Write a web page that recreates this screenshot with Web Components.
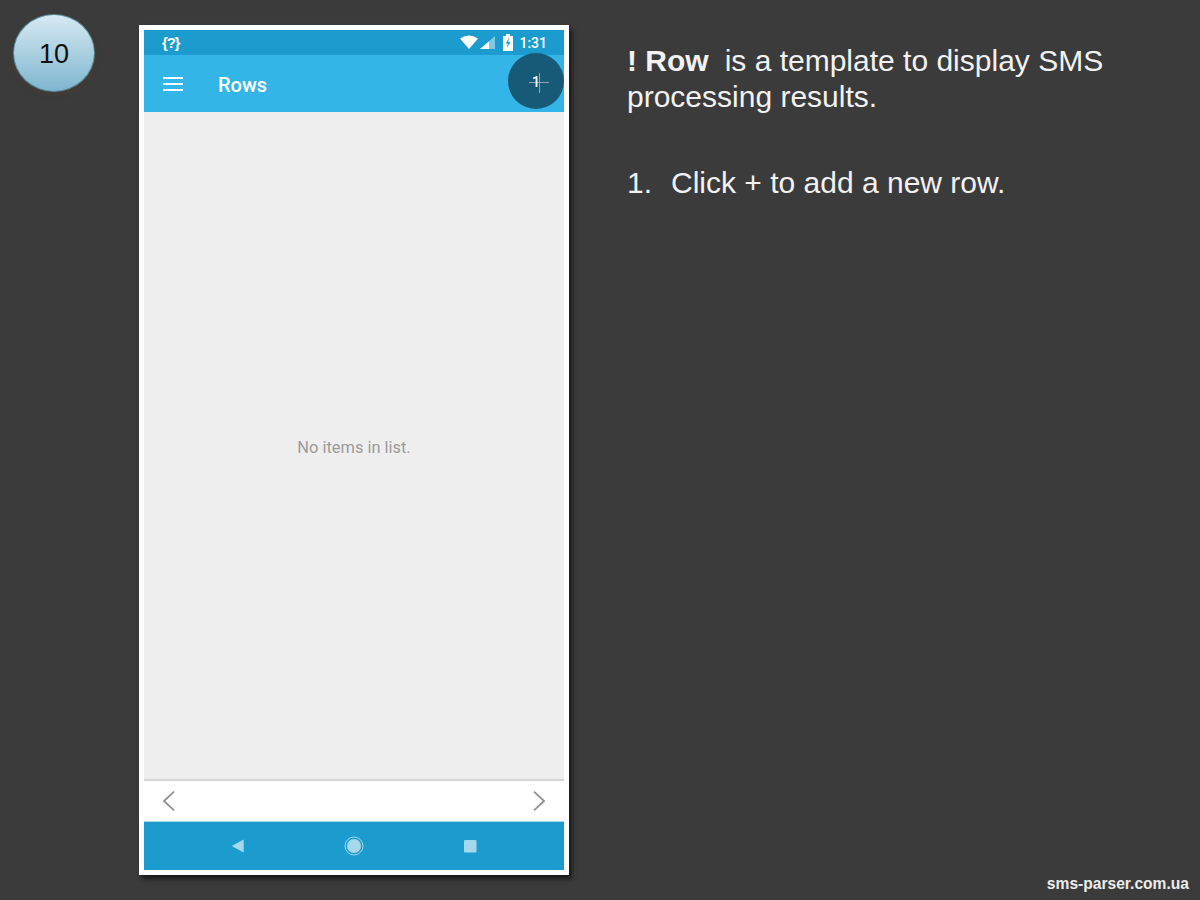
<!DOCTYPE html>
<html>
<head>
<meta charset="utf-8">
<title>Rows</title>
<style>
    html, body{ margin: 0; height: 100%; background: #3b3b3b; }
</style>
</head>
<body>
<help-slide>
    <step-badge slot="badge">10</step-badge>
    <phone-frame slot="phone">
        <status-bar slot="status"></status-bar>
        <app-bar slot="appbar" title="Rows"></app-bar>
        <span slot="empty">No items in list.</span>
        <pager-bar slot="pager"></pager-bar>
        <nav-bar slot="nav"></nav-bar>
    </phone-frame>
    <slide-notes slot="notes"></slide-notes>
    <span slot="footer">sms-parser.com.ua</span>
</help-slide>

<script>
class HelpSlide extends HTMLElement {
    connectedCallback(){
        const shadow = this.attachShadow({ mode: 'open' });
        shadow.innerHTML = `
<style>
    :host{
        display: flex;
        flex-direction: column;
        width: 1200px;
        height: 900px;
        overflow: hidden;
        background: #3b3b3b;
    }
    .main{
        display: flex;
        flex-direction: row;
        align-items: flex-start;
        height: 874px;
    }
    .badge{ padding: 14px 0 0 13px; }
    .phone{ padding: 25px 0 0 44px; }
    .notes{ padding: 43px 0 0 58px; }
    .footer{
        height: 26px;
        text-align: right;
        padding-right: 11px;
        font: bold 15.6px/19px "Liberation Sans", Arial, sans-serif;
        color: #ececec;
    }
</style>
<div class="main">
    <div class="badge"><slot name="badge"></slot></div>
    <div class="phone"><slot name="phone"></slot></div>
    <div class="notes"><slot name="notes"></slot></div>
</div>
<div class="footer"><slot name="footer"></slot></div>`;
    }
}

class StepBadge extends HTMLElement {
    connectedCallback(){
        const shadow = this.attachShadow({ mode: 'open' });
        shadow.innerHTML = `
<style>
    :host{
        display: flex;
        align-items: center;
        justify-content: center;
        box-sizing: border-box;
        width: 82px;
        height: 78px;
        border-radius: 50%;
        border: 1px solid #5a8c9e;
        background: linear-gradient(#d6e9f2, #7fb6cf);
        box-shadow: 0 3px 5px rgba(90, 60, 40, .35);
        font: 27px "Liberation Sans", Arial, sans-serif;
        color: #111;
        padding-top: 2px;
    }
</style>
<slot></slot>`;
    }
}

class PhoneFrame extends HTMLElement {
    connectedCallback(){
        const shadow = this.attachShadow({ mode: 'open' });
        shadow.innerHTML = `
<style>
    :host{
        display: flex;
        flex-direction: column;
        position: relative;
        box-sizing: border-box;
        width: 430px;
        height: 850px;
        border: 5px solid #fff;
        background: #fff;
        box-shadow: 3px 4px 5px rgba(0, 0, 0, .6);
    }
    .list{
        flex: 1;
        display: flex;
        align-items: center;
        justify-content: center;
        padding-top: 4px;
        background: #eeeeee;
        border-bottom: 2px solid #d6d6d6;
        font: 16.4px Roboto, sans-serif;
        color: #9a9a9a;
    }
</style>
<slot name="status"></slot>
<slot name="appbar"></slot>
<div class="list"><slot name="empty"></slot></div>
<slot name="pager"></slot>
<slot name="nav"></slot>`;
    }
}

class StatusBar extends HTMLElement {
    connectedCallback(){
        const shadow = this.attachShadow({ mode: 'open' });
        shadow.innerHTML = `
<style>
    :host{
        display: flex;
        align-items: center;
        height: 25px;
        padding: 0 17px 0 18px;
        background: #1b9bce;
        color: #fff;
        font: 500 14px Roboto, sans-serif;
    }
    .dbg{
        font: bold 15px "Liberation Sans", Arial, sans-serif;
        letter-spacing: -1.2px;
    }
    .gap{ flex: 1; }
    svg{ display: block; }
    .time{ margin-left: 6px; }
</style>
<span class="dbg">{?}</span>
<span class="gap"></span>
<svg width="37" height="16" viewBox="0 0 37 16">
    <path d="M0 3.5 Q9 -2.5 18 3.5 L9 14 Z" fill="#fff"/>
    <path d="M20 14 L35 1 V14 Z" fill="#fff" opacity=".45"/>
    <path d="M20 14 L29 6.5 V14 Z" fill="#fff"/>
</svg>
<svg style="margin-left:6px" width="10" height="17" viewBox="0 0 10 17">
    <path d="M3 0 H7 V2 H10 V17 H0 V2 H3 Z" fill="#fff"/>
    <path d="M6 4 L2.8 9.5 H4.8 L4 14 L7.3 8 H5.3 Z" fill="#1b9bce"/>
</svg>
<span class="time">1:31</span>`;
    }
}

class AppBar extends HTMLElement {
    connectedCallback(){
        const title = this.getAttribute('title');
        const shadow = this.attachShadow({ mode: 'open' });
        shadow.innerHTML = `
<style>
    :host{
        display: flex;
        align-items: center;
        height: 57px;
        padding-left: 19px;
        background: #33b5e8;
        color: #fff;
    }
    svg{ display: block; }
    .title{
        margin-left: 35px;
        padding-top: 2px;
        font: 500 20px Roboto, sans-serif;
    }
    .fab{
        position: absolute;
        right: 0;
        top: 23px;
        width: 56px;
        height: 56px;
        border-radius: 50%;
        background: #175a78;
    }
    .fab svg{ position: absolute; left: 21px; top: 20px; }
    .fab span{
        position: absolute;
        left: 24px;
        top: 21px;
        font: 500 14px/16px Roboto, sans-serif;
        color: #fff;
    }
</style>
<svg width="20" height="14" viewBox="0 0 20 14" fill="#fff">
    <rect y="0" width="20" height="2"/>
    <rect y="6" width="20" height="2"/>
    <rect y="12" width="20" height="2"/>
</svg>
<span class="title">${title}</span>
<div class="fab">
    <svg width="20" height="20" viewBox="0 0 20 20" stroke="#8fa5b0" stroke-width="1">
        <path d="M0 9.5 H20 M10.5 0 V20"/>
    </svg>
    <span>1</span>
</div>`;
    }
}

class PagerBar extends HTMLElement {
    connectedCallback(){
        const shadow = this.attachShadow({ mode: 'open' });
        shadow.innerHTML = `
<style>
    :host{
        display: flex;
        align-items: center;
        justify-content: space-between;
        height: 40px;
        padding: 0 18px;
        background: #fff;
    }
    svg{ display: block; }
</style>
<svg width="13" height="20" viewBox="0 0 13 20" fill="none" stroke="#8f8f8f" stroke-width="1.8">
    <path d="M12 .7 L2 10 L12 19.3"/>
</svg>
<svg width="13" height="20" viewBox="0 0 13 20" fill="none" stroke="#8f8f8f" stroke-width="1.8">
    <path d="M1 .7 L11 10 L1 19.3"/>
</svg>`;
    }
}

class NavBar extends HTMLElement {
    connectedCallback(){
        const shadow = this.attachShadow({ mode: 'open' });
        shadow.innerHTML = `
<style>
    :host{
        display: flex;
        align-items: center;
        justify-content: center;
        gap: 96px;
        box-sizing: border-box;
        height: 49px;
        border-top: 1px solid #a8d8ec;
        background: #1b9bce;
    }
    svg{ display: block; }
</style>
<svg width="20" height="20" viewBox="0 0 20 20" fill="#a6d8ec"><path d="M3.7 10 L15.7 3.5 V16.5 Z"/></svg>
<svg width="20" height="20" viewBox="0 0 20 20">
    <circle cx="10" cy="10" r="9" fill="none" stroke="#a6d8ec" stroke-width="1"/>
    <circle cx="10" cy="10" r="7" fill="#a6d8ec"/>
</svg>
<svg width="20" height="20" viewBox="0 0 20 20" fill="#a6d8ec"><rect x="4" y="4" width="12.5" height="12.5" rx="1"/></svg>`;
    }
}

class SlideNotes extends HTMLElement {
    connectedCallback(){
        const shadow = this.attachShadow({ mode: 'open' });
        shadow.innerHTML = `
<style>
    :host{
        display: block;
        width: 530px;
        font: 30px/36px "Liberation Sans", Arial, sans-serif;
        color: #f2f2f2;
    }
    .line{ display: flex; gap: 16px; white-space: nowrap; }
    ol{
        list-style: none;
        margin: 50px 0 0;
        padding: 0;
    }
    li{
        display: flex;
        gap: 19px;
    }
</style>
<div class="line"><b>! Row</b><span>is a template to display SMS</span></div>
<div class="line"><span>processing results.</span></div>
<ol><li><span>1.</span><span>Click + to add a new row.</span></li></ol>`;
    }
}

customElements.define('help-slide', HelpSlide);
customElements.define('step-badge', StepBadge);
customElements.define('phone-frame', PhoneFrame);
customElements.define('status-bar', StatusBar);
customElements.define('app-bar', AppBar);
customElements.define('pager-bar', PagerBar);
customElements.define('nav-bar', NavBar);
customElements.define('slide-notes', SlideNotes);
</script>
</body>
</html>
